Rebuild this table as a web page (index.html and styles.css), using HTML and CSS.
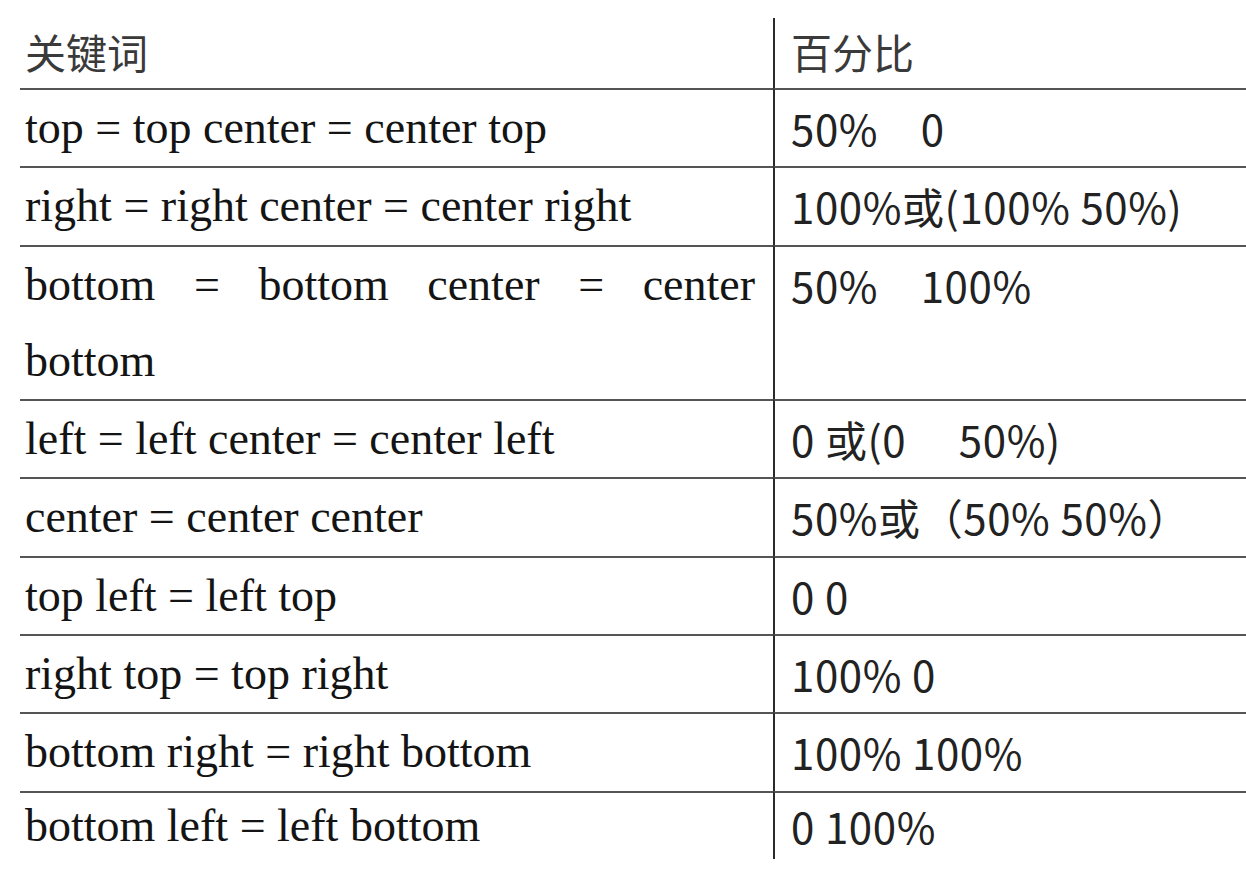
FILE: index.html
```html
<!DOCTYPE html>
<html lang="zh-CN">
<head>
<meta charset="utf-8">
<title>关键词 百分比</title>
<link rel="stylesheet" href="styles.css">
</head>
<body>
<table class="pos-table">
  <thead>
    <tr class="head-row">
      <th class="kw">关键词</th>
      <th class="pc">百分比</th>
    </tr>
  </thead>
  <tbody>
    <tr><td class="kw">top = top center = center top</td><td class="pc">50%　0</td></tr>
    <tr><td class="kw">right = right center = center right</td><td class="pc">100%或(100% 50%)</td></tr>
    <tr><td class="kw"><div class="just">bottom = bottom center = center</div><div>bottom</div></td><td class="pc top">50%　100%</td></tr>
    <tr><td class="kw">left = left center = center left</td><td class="pc">0 或(0　 50%)</td></tr>
    <tr><td class="kw">center = center center</td><td class="pc">50%或（50% 50%）</td></tr>
    <tr><td class="kw">top left = left top</td><td class="pc">0 0</td></tr>
    <tr><td class="kw">right top = top right</td><td class="pc">100% 0</td></tr>
    <tr><td class="kw">bottom right = right bottom</td><td class="pc">100% 100%</td></tr>
    <tr class="last-row"><td class="kw">bottom left = left bottom</td><td class="pc">0 100%</td></tr>
  </tbody>
</table>
</body>
</html>
```

FILE: styles.css
```css
html, body {
  margin: 0;
  padding: 0;
  background: #ffffff;
}

.pos-table {
  margin: 18px 0 0 20px;
  width: calc(100% - 20px);
  border-collapse: separate;
  border-spacing: 0;
  table-layout: fixed;
}

.pos-table th,
.pos-table td {
  padding: 0;
  vertical-align: top;
  text-align: left;
  font-weight: normal;
}

.pos-table td {
  border-top: 2px solid #555555;
  line-height: 76.3px;
}

.kw {
  width: 730px;
  padding-left: 5px !important;
  padding-right: 18px !important;
  font-family: "Liberation Serif", "Noto Sans CJK SC", serif;
  font-size: 46px;
  color: #141414;
}

.pc {
  padding-left: 16px !important;
  border-left: 2px solid #2a2a2a;
  font-family: "Noto Sans CJK SC", "Noto Sans", sans-serif;
  font-size: 42px;
  letter-spacing: 0.6px;
  color: #222222;
  white-space: pre;
}

.head-row th {
  height: 70px;
  line-height: 66px;
  font-family: "Noto Sans CJK SC", "Noto Sans", sans-serif;
  font-size: 41px;
  letter-spacing: 0;
  color: #3a3a3a;
}

.just {
  text-align: justify;
  text-align-last: justify;
}

.last-row td {
  line-height: 66px;
}
```
